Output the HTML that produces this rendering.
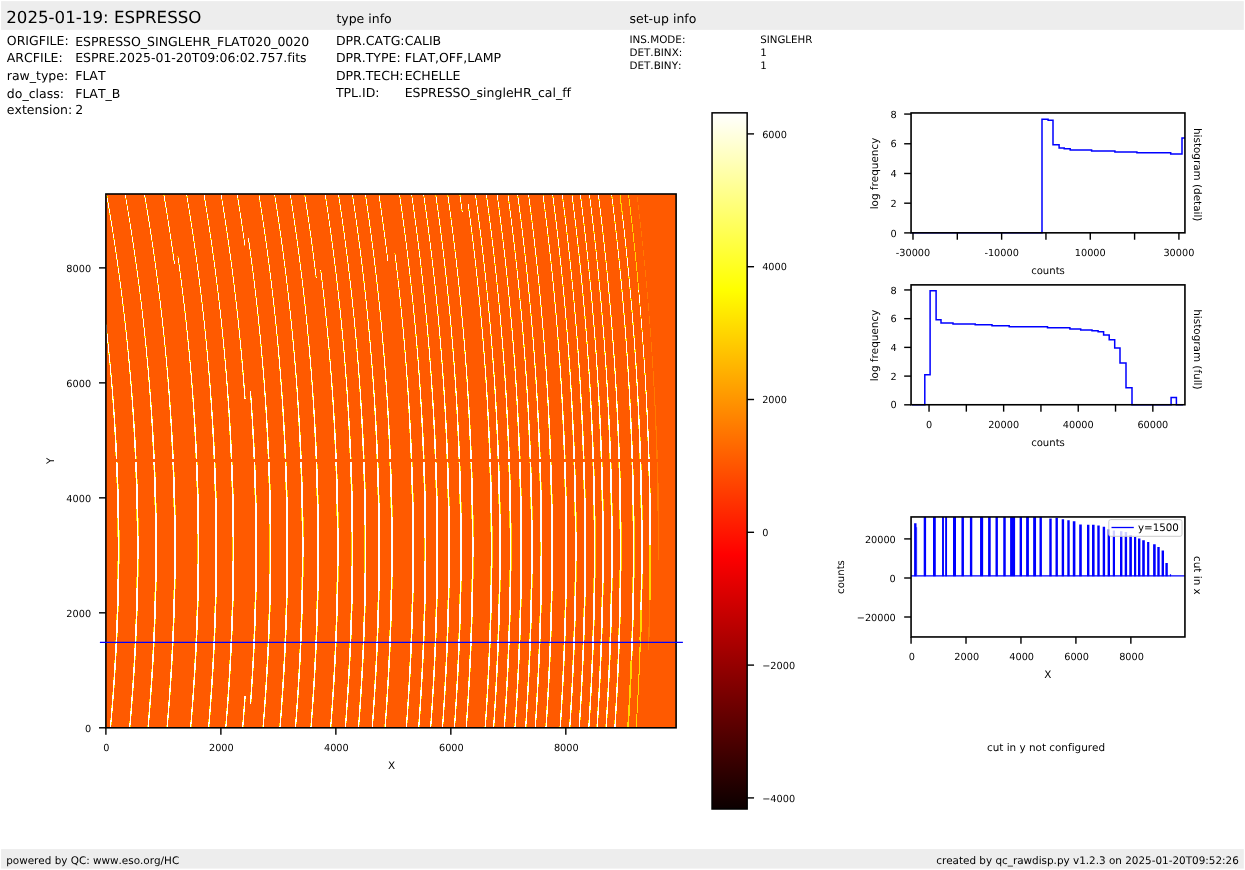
<!DOCTYPE html>
<html><head><meta charset="utf-8"><title>ESPRESSO raw display</title>
<style>html,body{margin:0;padding:0;background:#fff}svg{display:block}text{font-family:"DejaVu Sans","Liberation Sans",sans-serif;fill:#000;font-variant-ligatures:none;font-kerning:none;text-rendering:geometricPrecision}</style>
</head><body>
<svg width="1245" height="870" viewBox="0 0 1245 870">
<rect width="1245" height="870" fill="#fff"/>
<rect x="1.1" y="1.15" width="1242.7" height="28.72" fill="#ededed"/>
<rect x="1.1" y="849.1" width="1242.7" height="19.5" fill="#ededed"/>
<rect x="105.9" y="194.0" width="570.2" height="533.8" fill="#ff5a00"/>
<g fill="none" stroke-width="1" shape-rendering="crispEdges">
<path stroke="#ff7a00" d="M648.5 627v23M649.5 600v37M637.5 197v5M638.5 205v5M639.5 214v5M640.5 222v6M641.5 231v6M642.5 241v5M643.5 250v6M644.5 260v6M645.5 270v7M646.5 281v7M647.5 292v7M648.5 303v8M649.5 316v8M650.5 328v9M651.5 342v10M652.5 356v12M653.5 371v15M654.5 387v19M655.5 405v25M656.5 426v33M657.5 450v9M657.5 462v49M658.5 483v77"/>
<path stroke="#ffd800" d="M106.5 324v11M107.5 333v11M108.5 342v13M109.5 352v13M110.5 362v15M110.5 718v10M111.5 373v16M111.5 705v20M112.5 384v19M112.5 692v21M113.5 396v22M113.5 677v24M114.5 409v26M114.5 660v28M115.5 424v32M115.5 640v33M116.5 440v19M116.5 462v21M116.5 614v42M117.5 462v75M117.5 561v76M118.5 484v128M119.5 530v34M106.5 195v2M107.5 196v7M108.5 202v7M109.5 208v7M110.5 214v7M111.5 220v7M112.5 226v7M113.5 233v7M114.5 239v7M115.5 246v7M116.5 252v8M117.5 259v8M118.5 266v8M119.5 273v9M120.5 281v8M121.5 288v9M122.5 296v10M123.5 304v10M124.5 313v10M125.5 321v11M126.5 330v12M127.5 339v13M128.5 349v14M129.5 359v15M129.5 721v7M130.5 370v16M130.5 708v19M131.5 381v19M131.5 695v21M132.5 393v22M132.5 680v24M133.5 407v25M133.5 663v28M134.5 421v31M134.5 644v32M135.5 437v22M135.5 462v16M135.5 619v41M136.5 456v3M136.5 462v59M136.5 577v64M137.5 479v137M138.5 518v59M125.5 195v4M126.5 199v6M127.5 205v6M128.5 211v6M129.5 217v6M130.5 223v7M131.5 229v7M132.5 236v7M133.5 242v8M134.5 249v8M135.5 256v8M136.5 263v8M137.5 270v8M138.5 277v9M139.5 285v9M140.5 293v9M141.5 301v9M142.5 309v10M143.5 318v10M144.5 327v11M145.5 336v12M146.5 345v14M147.5 356v14M147.5 725v3M148.5 366v16M148.5 712v16M149.5 377v18M149.5 699v21M150.5 389v21M150.5 685v23M151.5 402v24M151.5 669v26M152.5 416v30M152.5 650v31M153.5 432v27M153.5 462v8M153.5 627v38M154.5 450v9M154.5 462v43M154.5 592v55M155.5 472v152M156.5 503v88M144.5 195v3M145.5 197v7M146.5 203v7M147.5 209v7M148.5 215v7M149.5 221v7M150.5 228v7M151.5 234v7M152.5 241v7M153.5 247v8M154.5 254v8M155.5 261v9M156.5 269v8M157.5 276v9M158.5 284v9M159.5 292v9M160.5 300v10M161.5 308v10M162.5 317v11M163.5 326v11M164.5 335v12M165.5 345v13M166.5 355v15M166.5 725v3M167.5 366v16M167.5 713v15M168.5 377v18M168.5 700v20M169.5 389v21M169.5 685v23M170.5 402v24M170.5 669v26M171.5 416v30M171.5 650v31M172.5 432v27M172.5 462v8M172.5 626v39M173.5 450v9M173.5 462v45M173.5 590v56M174.5 472v151M175.5 505v84M163.5 195v1M164.5 195v7M165.5 201v7M166.5 207v7M167.5 213v7M168.5 220v7M169.5 226v7M170.5 233v7M171.5 239v8M172.5 246v8M173.5 253v8M174.5 260v4M177.5 256v1M178.5 257v8M179.5 264v8M180.5 271v9M181.5 279v9M182.5 287v9M183.5 295v9M184.5 303v10M185.5 311v11M186.5 320v12M187.5 330v12M188.5 339v13M189.5 349v14M190.5 360v15M190.5 720v8M191.5 371v17M191.5 707v20M192.5 383v19M192.5 693v22M193.5 395v23M193.5 677v25M194.5 409v27M194.5 659v29M195.5 424v34M195.5 638v35M196.5 441v18M196.5 462v25M196.5 610v46M197.5 462v173M198.5 488v119M186.5 195v2M187.5 196v7M188.5 203v6M189.5 209v7M190.5 215v7M191.5 221v8M192.5 228v7M193.5 234v8M194.5 241v8M195.5 248v8M196.5 255v8M197.5 263v8M198.5 270v9M199.5 278v9M200.5 286v9M201.5 294v9M202.5 302v10M203.5 311v10M204.5 320v11M205.5 329v12M206.5 339v13M207.5 349v14M208.5 360v15M208.5 719v9M209.5 371v17M209.5 706v21M210.5 383v20M210.5 692v23M211.5 396v23M211.5 676v26M212.5 410v27M212.5 658v30M213.5 425v34M213.5 636v36M214.5 442v17M214.5 462v29M214.5 606v48M215.5 463v170M216.5 491v113M204.5 195v6M205.5 200v7M206.5 206v7M207.5 213v7M208.5 219v7M209.5 226v7M210.5 232v8M211.5 239v8M212.5 246v8M213.5 253v8M214.5 260v9M215.5 268v9M216.5 276v9M217.5 284v9M218.5 292v9M219.5 300v10M220.5 309v10M221.5 318v11M222.5 327v12M223.5 337v13M224.5 347v14M225.5 358v15M225.5 721v7M226.5 369v17M226.5 708v20M227.5 381v20M227.5 694v22M228.5 394v23M228.5 678v26M229.5 408v27M229.5 660v30M230.5 423v34M230.5 639v35M231.5 440v19M231.5 462v25M231.5 610v46M232.5 462v173M233.5 488v119M221.5 195v5M222.5 200v6M223.5 206v7M224.5 212v7M225.5 219v7M226.5 225v8M227.5 232v8M228.5 239v8M229.5 246v8M230.5 253v8M231.5 260v9M232.5 268v9M233.5 276v9M234.5 284v9M235.5 292v10M236.5 301v10M237.5 309v11M238.5 318v12M239.5 328v12M240.5 338v13M241.5 348v15M242.5 359v16M242.5 720v8M243.5 370v18M243.5 706v21M244.5 383v16M244.5 696v19M245.5 396v3M245.5 696v6M250.5 391v12M250.5 692v12M251.5 396v23M251.5 676v26M252.5 410v29M252.5 657v30M253.5 426v33M253.5 634v37M254.5 443v16M254.5 462v33M254.5 602v51M255.5 465v166M256.5 495v105M237.5 195v5M238.5 199v7M239.5 205v7M240.5 212v7M241.5 218v8M242.5 225v7M243.5 232v7M244.5 239v7M248.5 238v5M249.5 242v8M250.5 249v9M251.5 257v8M252.5 264v9M253.5 272v9M254.5 280v9M255.5 288v10M256.5 297v10M257.5 305v11M258.5 314v12M259.5 324v12M260.5 334v13M261.5 344v14M262.5 355v15M262.5 725v3M263.5 366v17M263.5 712v16M264.5 378v19M264.5 697v22M265.5 391v22M265.5 682v25M266.5 405v27M266.5 664v29M267.5 420v34M267.5 642v35M268.5 437v22M268.5 462v21M268.5 614v46M269.5 457v2M269.5 462v177M270.5 484v128M259.5 195v7M260.5 201v7M261.5 207v8M262.5 214v7M263.5 221v7M264.5 227v8M265.5 234v8M266.5 241v8M267.5 249v8M268.5 256v9M269.5 264v9M270.5 272v9M271.5 280v9M272.5 288v10M273.5 297v10M274.5 305v11M275.5 315v11M276.5 324v12M277.5 334v13M278.5 344v15M279.5 355v16M279.5 723v5M280.5 367v18M280.5 710v18M281.5 379v20M281.5 695v23M282.5 392v24M282.5 679v26M283.5 406v29M283.5 661v30M284.5 422v36M284.5 638v37M285.5 440v19M285.5 462v28M285.5 608v49M286.5 462v173M287.5 490v115M274.5 195v2M275.5 197v7M276.5 203v7M277.5 209v8M278.5 216v8M279.5 223v8M280.5 230v8M281.5 237v8M282.5 244v8M283.5 251v9M284.5 259v9M285.5 267v9M286.5 275v9M287.5 283v10M288.5 292v10M289.5 300v11M290.5 310v11M291.5 319v12M292.5 329v13M293.5 339v14M294.5 350v15M295.5 361v17M295.5 717v11M296.5 373v19M296.5 703v21M297.5 386v22M297.5 687v25M298.5 400v26M298.5 669v29M299.5 415v32M299.5 649v33M300.5 432v27M300.5 462v12M300.5 622v43M301.5 451v8M301.5 462v59M301.5 577v68M302.5 476v144M303.5 517v60M290.5 195v4M291.5 199v7M292.5 205v7M293.5 212v7M294.5 218v8M295.5 225v8M296.5 232v8M297.5 239v9M298.5 247v8M299.5 254v9M300.5 262v9M301.5 270v9M302.5 278v10M303.5 287v10M304.5 295v11M305.5 304v11M306.5 314v11M307.5 323v13M308.5 334v13M309.5 344v15M310.5 355v16M310.5 723v5M311.5 367v18M311.5 709v19M312.5 380v20M312.5 694v24M313.5 393v24M313.5 678v26M314.5 408v29M314.5 658v32M315.5 424v35M315.5 635v38M316.5 442v17M316.5 462v34M316.5 601v53M317.5 464v168M318.5 495v105M304.5 195v2M305.5 196v7M306.5 202v8M307.5 209v8M308.5 216v7M309.5 223v8M310.5 230v8M311.5 237v8M312.5 244v9M313.5 252v9M314.5 260v9M315.5 268v9M316.5 276v2M320.5 270v3M321.5 272v9M322.5 280v10M323.5 289v10M324.5 297v11M325.5 307v11M326.5 316v12M327.5 326v13M328.5 336v14M329.5 347v15M330.5 359v16M330.5 719v9M331.5 371v19M331.5 705v22M332.5 383v22M332.5 689v25M333.5 397v26M333.5 672v28M334.5 413v31M334.5 651v34M335.5 429v30M335.5 462v9M335.5 625v42M336.5 449v10M336.5 462v54M336.5 582v65M337.5 474v148M338.5 512v70M325.5 195v5M326.5 199v8M327.5 206v7M328.5 213v7M329.5 220v7M330.5 227v8M331.5 234v8M332.5 241v9M333.5 249v9M334.5 257v9M335.5 265v9M336.5 273v10M337.5 281v10M338.5 290v11M339.5 299v11M340.5 308v12M341.5 318v13M342.5 328v14M343.5 339v14M344.5 350v16M345.5 362v17M345.5 715v13M346.5 374v20M346.5 700v23M347.5 387v24M347.5 684v26M348.5 402v28M348.5 665v30M349.5 418v35M349.5 643v36M350.5 436v23M350.5 462v22M350.5 613v48M351.5 457v2M351.5 462v177M352.5 484v127M338.5 195v3M339.5 197v8M340.5 204v8M341.5 211v7M342.5 218v8M343.5 225v8M344.5 232v8M345.5 240v8M346.5 247v9M347.5 255v9M348.5 263v9M349.5 271v10M350.5 280v10M351.5 288v11M352.5 297v11M353.5 307v11M354.5 317v12M355.5 327v13M356.5 337v15M357.5 348v16M358.5 360v18M358.5 717v11M359.5 373v19M359.5 702v23M360.5 386v23M360.5 686v26M361.5 400v28M361.5 667v30M362.5 416v35M362.5 645v36M363.5 434v25M363.5 462v19M363.5 616v47M364.5 455v4M364.5 462v179M365.5 482v131M352.5 195v4M353.5 198v7M354.5 205v7M355.5 212v7M356.5 219v8M357.5 226v8M358.5 233v9M359.5 241v8M360.5 248v9M361.5 256v9M362.5 264v10M363.5 273v10M364.5 281v11M365.5 290v11M366.5 300v11M367.5 309v12M368.5 319v13M369.5 329v14M370.5 340v15M371.5 352v16M371.5 727v1M372.5 364v18M372.5 713v15M373.5 376v21M373.5 697v24M374.5 390v25M374.5 680v27M375.5 405v30M375.5 661v31M376.5 421v38M376.5 636v40M377.5 440v19M377.5 462v33M377.5 602v54M378.5 463v170M379.5 495v105M365.5 195v4M366.5 198v8M367.5 205v8M368.5 212v8M369.5 219v8M370.5 226v8M371.5 234v8M372.5 241v9M373.5 249v9M374.5 257v9M375.5 265v10M376.5 274v10M377.5 282v11M378.5 291v11M379.5 301v11M380.5 310v12M381.5 320v13M382.5 331v14M383.5 342v15M384.5 353v17M384.5 724v4M385.5 366v19M385.5 710v18M386.5 379v21M386.5 694v25M387.5 393v25M387.5 677v28M388.5 408v31M388.5 656v33M389.5 425v34M389.5 462v4M389.5 630v42M390.5 445v14M390.5 462v46M390.5 590v62M391.5 469v158M392.5 505v84M379.5 195v7M380.5 201v8M381.5 208v8M382.5 216v8M383.5 223v8M384.5 230v9M385.5 238v8M386.5 246v8M387.5 254v7M394.5 253v1M395.5 254v9M396.5 262v9M397.5 270v10M398.5 279v10M399.5 288v11M400.5 297v11M401.5 307v12M402.5 317v12M403.5 327v14M404.5 338v15M405.5 350v16M406.5 362v18M406.5 715v13M407.5 375v20M407.5 699v24M408.5 388v25M408.5 682v27M409.5 403v30M409.5 662v32M410.5 420v38M410.5 638v39M411.5 439v20M411.5 462v32M411.5 604v54M412.5 462v172M413.5 493v109M399.5 195v3M400.5 197v8M401.5 204v8M402.5 211v9M403.5 219v8M404.5 226v9M405.5 234v8M406.5 242v8M407.5 250v9M408.5 258v9M409.5 266v10M410.5 275v10M411.5 284v11M412.5 293v11M413.5 303v12M414.5 313v12M415.5 323v14M416.5 334v15M417.5 345v16M418.5 357v18M418.5 719v9M419.5 370v20M419.5 704v23M420.5 384v23M420.5 687v27M421.5 399v28M421.5 668v31M422.5 415v36M422.5 645v37M423.5 433v26M423.5 462v21M423.5 614v49M424.5 455v4M424.5 462v179M425.5 484v127M411.5 195v2M412.5 197v7M413.5 204v8M414.5 211v8M415.5 218v8M416.5 226v8M417.5 233v9M418.5 241v9M419.5 249v9M420.5 257v10M421.5 266v10M422.5 275v10M423.5 284v11M424.5 293v11M425.5 303v12M426.5 313v13M427.5 323v14M428.5 334v15M429.5 346v16M430.5 358v18M430.5 718v10M431.5 371v21M431.5 703v23M432.5 385v24M432.5 686v27M433.5 400v29M433.5 666v31M434.5 417v37M434.5 642v39M435.5 435v24M435.5 462v26M435.5 609v52M436.5 458v1M436.5 462v176M437.5 488v119M423.5 195v2M424.5 197v8M425.5 204v8M426.5 211v8M427.5 218v9M428.5 226v9M429.5 234v8M430.5 242v9M431.5 250v9M432.5 258v10M433.5 267v10M434.5 276v10M435.5 285v11M436.5 294v12M437.5 304v12M438.5 314v13M439.5 325v14M440.5 336v15M441.5 348v16M442.5 360v19M442.5 716v12M443.5 373v22M443.5 700v24M444.5 387v25M444.5 682v28M445.5 403v30M445.5 662v33M446.5 420v39M446.5 636v41M447.5 439v20M447.5 462v36M447.5 600v57M448.5 463v170M449.5 497v101M435.5 195v2M436.5 196v8M437.5 203v8M438.5 210v9M439.5 218v8M440.5 225v9M441.5 233v9M442.5 241v9M443.5 249v10M444.5 258v10M445.5 266v11M446.5 275v11M447.5 285v11M448.5 294v12M449.5 304v12M450.5 314v13M451.5 325v14M452.5 336v16M453.5 348v17M454.5 361v19M454.5 715v13M455.5 374v22M455.5 699v24M456.5 388v26M456.5 681v28M457.5 404v32M457.5 660v33M458.5 422v37M458.5 462v1M458.5 633v43M459.5 441v18M459.5 462v42M459.5 594v61M460.5 466v164M461.5 502v90M447.5 195v2M448.5 196v8M449.5 203v8M450.5 211v8M451.5 218v9M452.5 226v8M453.5 234v9M454.5 242v9M455.5 250v9M456.5 258v10M457.5 267v10M458.5 276v11M459.5 286v11M460.5 295v12M461.5 305v13M462.5 316v13M463.5 327v14M464.5 338v16M465.5 350v17M465.5 727v1M466.5 363v19M466.5 712v16M467.5 376v23M467.5 696v25M468.5 391v27M468.5 677v29M469.5 407v33M469.5 655v35M470.5 425v34M470.5 462v7M470.5 627v45M471.5 446v13M471.5 462v57M471.5 579v72M472.5 472v152M473.5 515v64M459.5 195v1M460.5 195v8M461.5 203v8M462.5 210v2M468.5 204v7M469.5 210v8M470.5 218v8M471.5 225v9M472.5 233v9M473.5 241v10M474.5 250v9M475.5 258v10M476.5 267v10M477.5 276v11M478.5 286v11M479.5 295v12M480.5 305v13M481.5 316v13M482.5 327v14M483.5 338v16M484.5 351v17M484.5 726v2M485.5 364v19M485.5 711v17M486.5 377v23M486.5 694v26M487.5 392v28M487.5 675v30M488.5 409v34M488.5 653v36M489.5 427v32M489.5 462v11M489.5 623v47M490.5 448v11M490.5 462v70M490.5 566v82M491.5 475v145M492.5 526v42M475.5 195v4M476.5 198v8M477.5 206v8M478.5 213v9M479.5 221v9M480.5 229v9M481.5 237v9M482.5 245v10M483.5 254v10M484.5 263v10M485.5 272v10M486.5 281v11M487.5 291v11M488.5 301v12M489.5 311v13M490.5 322v14M491.5 334v15M492.5 346v17M493.5 358v19M493.5 717v11M494.5 372v22M494.5 701v25M495.5 386v26M495.5 682v29M496.5 402v32M496.5 661v34M497.5 420v39M497.5 634v43M498.5 440v19M498.5 462v42M498.5 594v62M499.5 465v166M500.5 502v90M486.5 195v5M487.5 199v8M488.5 206v9M489.5 214v9M490.5 222v9M491.5 230v9M492.5 238v9M493.5 246v10M494.5 255v10M495.5 264v10M496.5 273v11M497.5 283v11M498.5 293v11M499.5 303v12M500.5 313v14M501.5 325v14M502.5 336v16M503.5 348v18M504.5 361v20M504.5 713v15M505.5 375v23M505.5 696v26M506.5 390v28M506.5 677v30M507.5 407v34M507.5 654v37M508.5 425v34M508.5 462v10M508.5 625v47M509.5 447v12M509.5 462v66M509.5 570v80M510.5 474v148M511.5 523v48M497.5 195v6M498.5 201v8M499.5 208v9M500.5 216v9M501.5 224v9M502.5 232v9M503.5 240v10M504.5 249v9M505.5 257v11M506.5 266v11M507.5 276v11M508.5 286v11M509.5 296v12M510.5 306v13M511.5 317v14M512.5 328v15M513.5 340v17M514.5 353v18M514.5 723v5M515.5 366v21M515.5 707v21M516.5 380v25M516.5 689v28M517.5 396v30M517.5 669v32M518.5 413v38M518.5 644v40M519.5 433v26M519.5 462v25M519.5 610v54M520.5 456v3M520.5 462v178M521.5 488v119M508.5 195v8M509.5 202v9M510.5 210v8M511.5 218v8M512.5 226v9M513.5 234v9M514.5 242v10M515.5 251v10M516.5 260v10M517.5 269v11M518.5 279v11M519.5 288v12M520.5 299v12M521.5 309v14M522.5 320v15M523.5 332v16M524.5 344v17M525.5 357v19M525.5 718v10M526.5 371v22M526.5 701v26M527.5 386v26M527.5 682v30M528.5 402v33M528.5 660v35M529.5 420v39M529.5 462v1M529.5 633v44M530.5 441v18M530.5 462v47M530.5 589v67M531.5 467v162M532.5 506v82M517.5 195v3M518.5 197v8M519.5 204v9M520.5 212v9M521.5 220v9M522.5 228v10M523.5 237v9M524.5 245v10M525.5 254v10M526.5 263v11M527.5 272v12M528.5 282v12M529.5 292v12M530.5 303v13M531.5 314v13M532.5 325v15M533.5 337v16M534.5 350v18M534.5 727v1M535.5 363v21M535.5 711v17M536.5 377v24M536.5 693v27M537.5 393v29M537.5 673v32M538.5 410v37M538.5 649v38M539.5 429v30M539.5 462v19M539.5 616v52M540.5 452v7M540.5 462v182M541.5 482v131M528.5 195v3M529.5 198v8M530.5 205v9M531.5 213v9M532.5 221v9M533.5 229v10M534.5 238v10M535.5 247v10M536.5 255v11M537.5 265v10M538.5 274v11M539.5 284v12M540.5 294v13M541.5 305v13M542.5 316v14M543.5 328v15M544.5 340v17M545.5 353v18M545.5 723v5M546.5 366v22M546.5 706v22M547.5 381v25M547.5 688v29M548.5 397v31M548.5 667v33M549.5 415v40M549.5 641v42M550.5 435v24M550.5 462v33M550.5 603v59M551.5 462v175M552.5 494v107M543.5 195v8M544.5 202v9M545.5 210v9M546.5 218v9M547.5 226v10M548.5 235v10M549.5 244v10M550.5 253v10M551.5 262v10M552.5 271v11M553.5 281v12M554.5 291v13M555.5 302v13M556.5 313v14M557.5 325v15M558.5 337v16M559.5 350v18M559.5 726v2M560.5 363v21M560.5 710v18M561.5 378v25M561.5 692v28M562.5 394v30M562.5 671v33M563.5 411v39M563.5 645v41M564.5 431v28M564.5 462v25M564.5 610v56M565.5 455v4M565.5 462v179M566.5 487v120M552.5 195v3M553.5 197v9M554.5 205v9M555.5 213v9M556.5 221v9M557.5 229v10M558.5 238v10M559.5 247v10M560.5 256v10M561.5 265v11M562.5 275v11M563.5 285v12M564.5 295v13M565.5 306v14M566.5 318v14M567.5 329v16M568.5 342v18M569.5 355v20M569.5 719v9M570.5 369v23M570.5 702v26M571.5 385v27M571.5 683v30M572.5 401v34M572.5 660v36M573.5 420v39M573.5 462v3M573.5 631v46M574.5 442v17M574.5 462v54M574.5 582v73M575.5 469v158M576.5 512v70M562.5 195v6M563.5 200v9M564.5 208v9M565.5 216v9M566.5 224v10M567.5 233v10M568.5 242v10M569.5 251v10M570.5 260v11M571.5 270v11M572.5 280v11M573.5 290v12M574.5 301v13M575.5 312v14M576.5 324v15M577.5 336v17M578.5 349v19M578.5 727v1M579.5 363v21M579.5 710v18M580.5 377v26M580.5 692v28M581.5 394v30M581.5 671v33M582.5 411v40M582.5 645v41M583.5 431v28M583.5 462v27M583.5 608v57M584.5 456v3M584.5 462v178M585.5 489v117M572.5 195v8M573.5 202v9M574.5 211v9M575.5 219v9M576.5 227v10M577.5 236v10M578.5 245v10M579.5 254v11M580.5 263v12M581.5 273v12M582.5 283v13M583.5 294v13M584.5 305v14M585.5 316v15M586.5 328v16M587.5 341v18M588.5 355v19M588.5 720v8M589.5 369v23M589.5 702v26M590.5 384v28M590.5 683v30M591.5 401v34M591.5 660v36M592.5 420v39M592.5 462v4M592.5 630v47M593.5 442v17M593.5 462v58M593.5 578v77M594.5 469v157M595.5 516v62M580.5 195v5M581.5 199v9M582.5 207v9M583.5 216v9M584.5 224v10M585.5 233v10M586.5 242v10M587.5 251v10M588.5 260v11M589.5 270v11M590.5 280v12M591.5 290v13M592.5 301v14M593.5 313v14M594.5 325v15M595.5 337v17M596.5 350v20M596.5 724v4M597.5 365v22M597.5 707v21M598.5 380v26M598.5 688v30M599.5 396v33M599.5 666v35M600.5 415v42M600.5 639v44M601.5 436v23M601.5 462v39M601.5 597v64M602.5 462v172M603.5 499v96M589.5 195v4M590.5 199v8M591.5 207v9M592.5 215v9M593.5 223v10M594.5 232v10M595.5 241v10M596.5 250v11M597.5 260v11M598.5 269v12M599.5 280v12M600.5 290v13M601.5 301v14M602.5 313v14M603.5 325v15M604.5 337v18M605.5 351v19M605.5 724v4M606.5 365v22M606.5 707v21M607.5 380v27M607.5 688v30M608.5 397v33M608.5 665v36M609.5 415v44M609.5 637v45M610.5 437v22M610.5 462v43M610.5 593v67M611.5 463v170M612.5 503v88M598.5 195v5M599.5 199v9M600.5 208v9M601.5 216v9M602.5 224v10M603.5 233v10M604.5 242v11M605.5 252v10M606.5 261v11M607.5 271v12M608.5 281v13M609.5 292v13M610.5 303v14M611.5 315v15M612.5 327v16M613.5 340v18M614.5 354v20M614.5 720v8M615.5 368v23M615.5 703v25M616.5 384v28M616.5 683v31M617.5 401v35M617.5 659v38M618.5 420v39M618.5 462v6M618.5 628v49M619.5 443v16M619.5 462v67M619.5 570v84M620.5 471v153M621.5 522v49M611.5 195v3M612.5 197v9M613.5 205v9M614.5 214v9M615.5 222v10M616.5 231v10M617.5 240v10M618.5 249v11M619.5 259v11M620.5 269v12M621.5 279v13M622.5 290v13M623.5 301v14M624.5 313v15M625.5 325v16M626.5 338v18M627.5 352v20M627.5 722v6M628.5 366v23M628.5 705v23M629.5 382v28M629.5 685v31M630.5 399v35M630.5 661v37M631.5 418v41M631.5 462v3M631.5 631v48M632.5 441v18M632.5 462v59M632.5 577v79M633.5 469v158M634.5 516v62M620.5 195v9M621.5 203v9M622.5 211v10M623.5 220v9M624.5 229v10M625.5 238v10M626.5 247v11M627.5 257v11M628.5 267v11M629.5 277v12M630.5 288v12M631.5 299v13M632.5 310v15M633.5 322v16M634.5 335v18M635.5 349v20M636.5 363v23M637.5 379v27M638.5 396v33M639.5 415v44M639.5 637v3M640.5 437v22M640.5 462v46M640.5 590v50M641.5 464v168M642.5 505v84M636.5 714v14M637.5 695v18M638.5 674v21M639.5 647v28M640.5 640v12M628.5 195v3M629.5 199v7M630.5 207v8M631.5 216v7M632.5 224v8M633.5 233v9M634.5 243v8M635.5 252v9M636.5 262v9M637.5 272v10M638.5 283v10M639.5 294v11M640.5 306v11M641.5 318v12M642.5 330v14M643.5 344v15M644.5 358v17M645.5 373v21M646.5 390v25M647.5 408v33M648.5 429v30M648.5 462v14M649.5 454v5M649.5 462v138M650.5 488v112"/>
<path stroke="#fff" d="M106.5 325v8M107.5 334v9M108.5 344v9M109.5 354v9M110.5 364v11M110.5 720v8M111.5 375v12M111.5 708v14M112.5 386v14M112.5 695v16M113.5 399v16M113.5 680v19M114.5 412v20M114.5 663v22M115.5 427v25M115.5 644v26M116.5 443v16M116.5 462v15M116.5 620v33M117.5 463v55M117.5 579v54M118.5 489v117M106.5 195v1M107.5 198v4M108.5 203v5M109.5 209v4M110.5 215v5M111.5 221v5M112.5 227v5M113.5 234v4M114.5 240v5M115.5 247v5M116.5 254v5M117.5 260v6M118.5 268v5M119.5 275v5M120.5 282v6M121.5 290v6M122.5 298v6M123.5 306v6M124.5 314v7M125.5 323v7M126.5 332v8M127.5 341v9M128.5 351v10M129.5 361v11M129.5 723v5M130.5 372v12M130.5 711v14M131.5 384v13M131.5 697v17M132.5 396v16M132.5 683v18M133.5 409v19M133.5 667v21M134.5 424v24M134.5 648v25M135.5 440v19M135.5 462v10M135.5 624v32M136.5 462v47M136.5 588v48M137.5 484v127M138.5 536v23M125.5 195v3M126.5 200v4M127.5 206v4M128.5 212v4M129.5 218v4M130.5 224v5M131.5 230v5M132.5 237v5M133.5 243v5M134.5 250v5M135.5 257v5M136.5 264v5M137.5 271v6M138.5 279v5M139.5 286v6M140.5 294v6M141.5 302v7M142.5 311v7M143.5 319v8M144.5 328v8M145.5 338v8M146.5 347v10M147.5 358v10M147.5 727v1M148.5 368v12M148.5 715v13M149.5 380v13M149.5 702v16M150.5 392v15M150.5 688v17M151.5 405v18M151.5 672v20M152.5 419v23M152.5 654v24M153.5 435v24M153.5 462v3M153.5 632v30M154.5 454v5M154.5 462v35M154.5 601v42M155.5 477v142M156.5 513v69M144.5 195v2M145.5 198v4M146.5 204v4M147.5 210v5M148.5 216v5M149.5 222v5M150.5 229v5M151.5 235v5M152.5 242v5M153.5 249v5M154.5 256v5M155.5 263v5M156.5 270v6M157.5 278v5M158.5 285v6M159.5 293v6M160.5 301v7M161.5 310v7M162.5 318v8M163.5 327v8M164.5 337v8M165.5 347v9M166.5 357v10M166.5 727v1M167.5 368v11M167.5 715v13M168.5 379v14M168.5 702v16M169.5 391v16M169.5 688v18M170.5 405v18M170.5 672v20M171.5 419v23M171.5 654v24M172.5 435v24M172.5 462v3M172.5 631v30M173.5 454v5M173.5 462v36M173.5 599v43M174.5 477v141M175.5 515v64M164.5 196v5M165.5 202v5M166.5 208v5M167.5 215v4M168.5 221v5M169.5 227v5M170.5 234v5M171.5 241v5M172.5 247v5M173.5 254v6M174.5 261v3M178.5 258v5M179.5 265v6M180.5 273v5M181.5 280v6M182.5 288v6M183.5 296v7M184.5 304v7M185.5 313v7M186.5 322v8M187.5 331v9M188.5 341v9M189.5 351v10M190.5 362v11M190.5 722v6M191.5 373v12M191.5 709v15M192.5 385v14M192.5 695v17M193.5 398v17M193.5 680v20M194.5 412v20M194.5 663v22M195.5 427v26M195.5 642v28M196.5 444v15M196.5 462v19M196.5 616v36M197.5 465v69M197.5 564v66M198.5 494v107M186.5 195v1M187.5 198v4M188.5 204v4M189.5 210v4M190.5 216v5M191.5 223v4M192.5 229v5M193.5 236v5M194.5 243v5M195.5 250v5M196.5 257v5M197.5 264v6M198.5 271v6M199.5 279v6M200.5 287v6M201.5 295v7M202.5 304v7M203.5 312v8M204.5 321v8M205.5 331v8M206.5 341v9M207.5 351v10M208.5 362v11M208.5 722v6M209.5 373v13M209.5 709v15M210.5 385v15M210.5 695v17M211.5 398v18M211.5 679v20M212.5 412v22M212.5 662v23M213.5 428v27M213.5 641v28M214.5 446v13M214.5 462v22M214.5 613v37M215.5 468v160M216.5 498v99M204.5 195v5M205.5 201v5M206.5 208v4M207.5 214v4M208.5 220v5M209.5 227v5M210.5 234v4M211.5 240v5M212.5 247v6M213.5 255v5M214.5 262v5M215.5 269v6M216.5 277v6M217.5 285v6M218.5 293v7M219.5 302v7M220.5 310v8M221.5 319v8M222.5 329v8M223.5 339v9M224.5 349v10M225.5 360v11M225.5 724v4M226.5 371v13M226.5 711v15M227.5 383v15M227.5 697v17M228.5 396v17M228.5 682v19M229.5 410v21M229.5 664v23M230.5 426v27M230.5 643v28M231.5 444v15M231.5 462v19M231.5 616v37M232.5 465v72M232.5 561v70M233.5 494v107M221.5 195v4M222.5 201v4M223.5 207v5M224.5 213v5M225.5 220v5M226.5 227v4M227.5 233v5M228.5 240v5M229.5 247v6M230.5 254v6M231.5 262v5M232.5 269v6M233.5 277v6M234.5 285v7M235.5 294v6M236.5 302v7M237.5 311v7M238.5 320v8M239.5 330v8M240.5 340v9M241.5 350v10M242.5 361v11M242.5 722v6M243.5 373v13M243.5 709v16M244.5 385v14M244.5 696v16M245.5 398v1M245.5 696v3M250.5 391v9M250.5 695v9M251.5 398v18M251.5 679v20M252.5 413v22M252.5 661v23M253.5 429v28M253.5 639v29M254.5 447v12M254.5 462v26M254.5 609v40M255.5 470v156M256.5 503v89M237.5 195v3M238.5 200v5M239.5 207v4M240.5 213v5M241.5 219v5M242.5 226v5M243.5 233v5M244.5 240v5M248.5 238v4M249.5 243v6M250.5 251v5M251.5 258v6M252.5 266v5M253.5 273v6M254.5 281v7M255.5 290v6M256.5 298v7M257.5 307v7M258.5 316v8M259.5 326v8M260.5 335v9M261.5 346v10M262.5 357v11M262.5 727v1M263.5 368v12M263.5 714v14M264.5 380v15M264.5 700v17M265.5 393v17M265.5 685v19M266.5 407v21M266.5 667v23M267.5 423v26M267.5 647v27M268.5 441v18M268.5 462v14M268.5 620v36M269.5 462v62M269.5 574v60M270.5 490v115M259.5 196v4M260.5 202v5M261.5 209v4M262.5 215v5M263.5 222v5M264.5 229v5M265.5 236v5M266.5 243v5M267.5 250v6M268.5 258v5M269.5 265v6M270.5 273v6M271.5 281v7M272.5 290v6M273.5 298v7M274.5 307v7M275.5 316v8M276.5 326v8M277.5 336v9M278.5 346v11M279.5 357v12M279.5 726v2M280.5 369v13M280.5 713v15M281.5 382v14M281.5 698v18M282.5 395v17M282.5 682v20M283.5 409v22M283.5 664v24M284.5 425v28M284.5 643v29M285.5 444v15M285.5 462v20M285.5 615v38M286.5 466v164M287.5 497v101M274.5 195v1M275.5 198v4M276.5 204v5M277.5 211v5M278.5 217v5M279.5 224v5M280.5 231v5M281.5 238v6M282.5 245v6M283.5 253v6M284.5 261v5M285.5 268v6M286.5 276v7M287.5 285v6M288.5 293v7M289.5 302v7M290.5 311v8M291.5 321v8M292.5 331v9M293.5 341v10M294.5 352v11M295.5 363v12M295.5 719v9M296.5 375v14M296.5 705v17M297.5 388v17M297.5 690v19M298.5 402v20M298.5 673v22M299.5 418v24M299.5 653v26M300.5 435v24M300.5 462v6M300.5 628v34M301.5 455v4M301.5 462v46M301.5 590v51M302.5 482v132M303.5 537v20M290.5 195v3M291.5 200v4M292.5 206v5M293.5 213v5M294.5 220v5M295.5 227v5M296.5 234v5M297.5 241v5M298.5 248v6M299.5 256v6M300.5 264v6M301.5 272v6M302.5 280v6M303.5 288v7M304.5 297v7M305.5 306v8M306.5 316v8M307.5 325v9M308.5 336v9M309.5 346v11M310.5 357v12M310.5 726v2M311.5 369v13M311.5 712v16M312.5 382v15M312.5 697v18M313.5 396v18M313.5 681v21M314.5 410v23M314.5 662v25M315.5 427v29M315.5 640v30M316.5 446v13M316.5 462v26M316.5 609v41M317.5 469v157M318.5 504v87M305.5 197v5M306.5 204v5M307.5 210v5M308.5 217v5M309.5 224v5M310.5 231v5M311.5 238v6M312.5 246v5M313.5 253v6M314.5 261v6M315.5 269v6M316.5 277v1M320.5 270v1M321.5 273v7M322.5 282v6M323.5 290v7M324.5 299v7M325.5 308v8M326.5 318v8M327.5 328v9M328.5 338v10M329.5 349v11M330.5 361v12M330.5 722v6M331.5 373v14M331.5 708v16M332.5 386v16M332.5 692v19M333.5 400v20M333.5 675v22M334.5 416v24M334.5 655v27M335.5 433v26M335.5 462v4M335.5 631v33M336.5 453v6M336.5 462v42M336.5 594v49M337.5 479v137M338.5 528v38M325.5 195v4M326.5 201v4M327.5 207v5M328.5 214v5M329.5 221v5M330.5 228v5M331.5 235v6M332.5 243v5M333.5 250v6M334.5 258v6M335.5 266v6M336.5 274v7M337.5 283v7M338.5 292v7M339.5 301v7M340.5 310v8M341.5 320v9M342.5 330v9M343.5 341v10M344.5 352v11M345.5 364v13M345.5 718v10M346.5 377v14M346.5 703v18M347.5 390v17M347.5 687v20M348.5 405v21M348.5 669v24M349.5 421v27M349.5 648v28M350.5 439v20M350.5 462v15M350.5 620v37M351.5 462v70M351.5 566v69M352.5 491v113M338.5 195v2M339.5 199v4M340.5 205v5M341.5 212v5M342.5 219v5M343.5 226v5M344.5 233v6M345.5 241v6M346.5 249v5M347.5 256v6M348.5 264v7M349.5 273v6M350.5 281v7M351.5 290v7M352.5 299v8M353.5 309v7M354.5 318v9M355.5 329v9M356.5 339v10M357.5 351v11M358.5 362v13M358.5 720v8M359.5 375v14M359.5 705v17M360.5 389v17M360.5 689v20M361.5 403v21M361.5 671v23M362.5 419v27M362.5 650v28M363.5 438v21M363.5 462v12M363.5 622v37M364.5 462v63M364.5 573v64M365.5 489v117M352.5 195v2M353.5 199v5M354.5 206v5M355.5 213v5M356.5 220v5M357.5 227v6M358.5 235v5M359.5 242v6M360.5 250v6M361.5 258v6M362.5 266v6M363.5 274v7M364.5 283v7M365.5 292v7M366.5 301v8M367.5 311v8M368.5 321v9M369.5 331v10M370.5 342v11M371.5 354v11M372.5 366v13M372.5 715v13M373.5 379v15M373.5 700v19M374.5 393v18M374.5 684v21M375.5 408v23M375.5 665v24M376.5 425v29M376.5 641v31M377.5 444v15M377.5 462v25M377.5 610v42M378.5 468v160M379.5 503v88M365.5 195v2M366.5 199v5M367.5 206v5M368.5 213v5M369.5 220v6M370.5 228v5M371.5 235v6M372.5 243v5M373.5 250v6M374.5 258v7M375.5 267v6M376.5 275v7M377.5 284v7M378.5 293v7M379.5 302v8M380.5 312v8M381.5 322v9M382.5 333v10M383.5 344v11M384.5 356v12M384.5 727v1M385.5 368v14M385.5 713v15M386.5 381v16M386.5 697v19M387.5 396v19M387.5 680v22M388.5 411v24M388.5 660v26M389.5 429v30M389.5 636v32M390.5 449v10M390.5 462v35M390.5 600v47M391.5 474v147M392.5 517v60M379.5 196v5M380.5 203v5M381.5 210v5M382.5 217v5M383.5 224v6M384.5 232v5M385.5 239v6M386.5 247v6M387.5 255v6M395.5 255v6M396.5 263v7M397.5 272v6M398.5 281v6M399.5 290v7M400.5 299v7M401.5 309v8M402.5 319v8M403.5 329v10M404.5 340v10M405.5 352v11M406.5 364v13M406.5 717v11M407.5 377v15M407.5 702v18M408.5 391v18M408.5 685v21M409.5 406v23M409.5 666v25M410.5 423v30M410.5 643v31M411.5 443v16M411.5 462v23M411.5 612v42M412.5 467v162M413.5 502v91M399.5 195v2M400.5 199v5M401.5 206v5M402.5 213v5M403.5 220v6M404.5 228v5M405.5 235v6M406.5 243v6M407.5 251v6M408.5 259v7M409.5 268v6M410.5 277v6M411.5 286v7M412.5 295v7M413.5 305v8M414.5 315v8M415.5 325v9M416.5 336v10M417.5 348v11M418.5 360v13M418.5 722v6M419.5 373v14M419.5 707v18M420.5 387v17M420.5 690v21M421.5 402v21M421.5 672v24M422.5 418v28M422.5 650v29M423.5 437v22M423.5 462v14M423.5 621v38M424.5 462v76M424.5 561v75M425.5 491v113M411.5 195v1M412.5 198v5M413.5 205v5M414.5 212v6M415.5 220v5M416.5 227v6M417.5 235v6M418.5 243v6M419.5 251v6M420.5 259v6M421.5 268v6M422.5 276v7M423.5 286v7M424.5 295v8M425.5 305v8M426.5 315v8M427.5 325v10M428.5 337v10M429.5 348v12M430.5 361v12M430.5 721v7M431.5 374v15M431.5 706v18M432.5 388v18M432.5 689v21M433.5 403v22M433.5 670v24M434.5 420v29M434.5 647v30M435.5 439v20M435.5 462v18M435.5 617v40M436.5 463v170M437.5 496v103M423.5 195v1M424.5 198v5M425.5 205v5M426.5 212v6M427.5 220v5M428.5 227v6M429.5 235v6M430.5 243v6M431.5 251v6M432.5 260v6M433.5 268v7M434.5 277v7M435.5 286v8M436.5 296v8M437.5 306v8M438.5 316v9M439.5 327v9M440.5 338v11M441.5 350v12M442.5 363v13M442.5 719v9M443.5 376v15M443.5 703v19M444.5 390v19M444.5 686v21M445.5 406v23M445.5 666v25M446.5 423v31M446.5 642v32M447.5 443v16M447.5 462v27M447.5 609v44M448.5 468v159M449.5 506v82M436.5 197v6M437.5 205v5M438.5 212v5M439.5 219v6M440.5 227v6M441.5 235v6M442.5 243v6M443.5 251v6M444.5 259v7M445.5 268v7M446.5 277v7M447.5 286v8M448.5 296v8M449.5 306v8M450.5 316v9M451.5 327v10M452.5 339v10M453.5 351v11M454.5 363v14M454.5 718v10M455.5 377v16M455.5 702v19M456.5 391v19M456.5 684v22M457.5 407v24M457.5 664v26M458.5 425v32M458.5 639v33M459.5 446v13M459.5 462v32M459.5 604v47M460.5 471v153M461.5 513v68M448.5 197v6M449.5 205v5M450.5 212v5M451.5 220v5M452.5 227v6M453.5 235v6M454.5 243v6M455.5 252v6M456.5 260v7M457.5 269v7M458.5 278v7M459.5 287v8M460.5 297v8M461.5 307v9M462.5 318v9M463.5 329v10M464.5 340v11M465.5 352v13M466.5 365v14M466.5 715v13M467.5 379v17M467.5 699v19M468.5 394v20M468.5 681v22M469.5 410v26M469.5 659v28M470.5 429v30M470.5 462v1M470.5 633v35M471.5 450v9M471.5 462v43M471.5 592v54M472.5 478v139M473.5 537v20M460.5 197v5M461.5 204v5M462.5 211v1M468.5 204v5M469.5 211v6M470.5 219v6M471.5 227v5M472.5 235v6M473.5 243v6M474.5 251v7M475.5 260v6M476.5 269v7M477.5 278v7M478.5 287v8M479.5 297v8M480.5 307v9M481.5 318v9M482.5 329v10M483.5 341v11M484.5 353v12M485.5 366v14M485.5 714v14M486.5 380v17M486.5 698v19M487.5 395v21M487.5 679v23M488.5 412v26M488.5 657v28M489.5 431v28M489.5 462v5M489.5 630v36M490.5 453v6M490.5 462v51M490.5 585v59M491.5 482v131M475.5 195v3M476.5 200v5M477.5 207v6M478.5 215v5M479.5 222v6M480.5 230v6M481.5 238v7M482.5 247v6M483.5 255v7M484.5 264v7M485.5 273v7M486.5 283v7M487.5 293v7M488.5 303v8M489.5 313v9M490.5 324v10M491.5 336v10M492.5 348v12M493.5 361v13M493.5 720v8M494.5 375v15M494.5 704v19M495.5 389v20M495.5 686v22M496.5 406v24M496.5 665v27M497.5 424v32M497.5 640v33M498.5 445v14M498.5 462v32M498.5 604v48M499.5 471v154M500.5 514v66M486.5 195v3M487.5 200v6M488.5 208v5M489.5 216v5M490.5 223v6M491.5 231v6M492.5 240v6M493.5 248v6M494.5 257v6M495.5 266v7M496.5 275v7M497.5 285v7M498.5 294v8M499.5 305v8M500.5 315v10M501.5 327v10M502.5 338v11M503.5 351v12M504.5 364v14M504.5 716v12M505.5 378v17M505.5 699v20M506.5 393v21M506.5 681v23M507.5 410v26M507.5 659v28M508.5 429v30M508.5 462v3M508.5 631v37M509.5 451v8M509.5 462v49M509.5 587v58M510.5 480v135M497.5 195v5M498.5 202v5M499.5 210v5M500.5 217v6M501.5 225v6M502.5 233v6M503.5 242v6M504.5 250v7M505.5 259v7M506.5 268v7M507.5 278v7M508.5 287v8M509.5 297v9M510.5 308v9M511.5 319v9M512.5 330v11M513.5 342v12M514.5 355v13M514.5 726v2M515.5 369v15M515.5 710v18M516.5 383v18M516.5 693v21M517.5 399v23M517.5 673v25M518.5 417v29M518.5 649v31M519.5 437v22M519.5 462v17M519.5 618v42M520.5 462v173M521.5 496v103M508.5 196v5M509.5 204v5M510.5 211v6M511.5 219v6M512.5 227v6M513.5 235v7M514.5 244v6M515.5 253v6M516.5 262v6M517.5 271v7M518.5 280v8M519.5 290v8M520.5 301v8M521.5 311v9M522.5 322v10M523.5 334v11M524.5 347v12M525.5 360v14M525.5 721v7M526.5 374v16M526.5 704v20M527.5 389v19M527.5 686v23M528.5 405v25M528.5 665v27M529.5 424v33M529.5 639v34M530.5 445v14M530.5 462v35M530.5 600v51M531.5 473v150M532.5 520v54M517.5 195v1M518.5 198v6M519.5 206v6M520.5 214v5M521.5 222v6M522.5 230v6M523.5 238v7M524.5 247v6M525.5 256v6M526.5 265v7M527.5 274v8M528.5 284v8M529.5 294v8M530.5 305v8M531.5 316v9M532.5 327v10M533.5 339v12M534.5 352v13M535.5 366v14M535.5 714v14M536.5 380v18M536.5 697v21M537.5 396v22M537.5 677v25M538.5 413v29M538.5 654v30M539.5 433v26M539.5 462v11M539.5 623v41M540.5 457v2M540.5 462v80M540.5 556v83M541.5 490v115M528.5 195v2M529.5 199v6M530.5 207v5M531.5 215v5M532.5 223v6M533.5 231v6M534.5 239v7M535.5 248v7M536.5 257v7M537.5 266v8M538.5 276v7M539.5 286v8M540.5 296v9M541.5 307v9M542.5 318v10M543.5 330v10M544.5 342v12M545.5 355v14M545.5 726v2M546.5 369v16M546.5 710v18M547.5 384v19M547.5 692v22M548.5 400v24M548.5 671v26M549.5 418v31M549.5 646v33M550.5 439v20M550.5 462v23M550.5 612v45M551.5 465v166M552.5 504v87M543.5 196v6M544.5 204v5M545.5 212v6M546.5 220v6M547.5 228v6M548.5 237v6M549.5 245v7M550.5 254v7M551.5 264v7M552.5 273v8M553.5 283v8M554.5 293v9M555.5 304v9M556.5 315v10M557.5 327v10M558.5 339v12M559.5 352v13M560.5 366v15M560.5 713v15M561.5 381v18M561.5 695v22M562.5 397v23M562.5 675v25M563.5 415v30M563.5 651v31M564.5 435v24M564.5 462v17M564.5 618v43M565.5 462v174M566.5 496v103M552.5 195v1M553.5 198v6M554.5 206v6M555.5 214v6M556.5 222v7M557.5 231v6M558.5 239v7M559.5 248v7M560.5 258v7M561.5 267v7M562.5 277v7M563.5 287v8M564.5 297v9M565.5 308v10M566.5 320v10M567.5 332v11M568.5 344v13M569.5 358v14M569.5 722v6M570.5 372v17M570.5 705v20M571.5 388v20M571.5 687v23M572.5 405v25M572.5 665v28M573.5 424v35M573.5 637v36M574.5 446v13M574.5 462v40M574.5 596v54M575.5 475v146M576.5 532v29M562.5 195v4M563.5 202v5M564.5 210v5M565.5 218v6M566.5 226v6M567.5 235v6M568.5 243v7M569.5 252v7M570.5 262v7M571.5 272v7M572.5 282v7M573.5 292v8M574.5 303v9M575.5 314v10M576.5 326v10M577.5 338v12M578.5 351v14M579.5 365v16M579.5 713v15M580.5 380v19M580.5 696v21M581.5 397v23M581.5 675v26M582.5 415v30M582.5 650v32M583.5 436v23M583.5 462v18M583.5 617v44M584.5 462v173M585.5 498v99M572.5 196v6M573.5 204v6M574.5 212v6M575.5 220v6M576.5 229v6M577.5 238v6M578.5 247v6M579.5 256v7M580.5 265v8M581.5 275v8M582.5 285v8M583.5 296v9M584.5 307v9M585.5 319v10M586.5 331v11M587.5 344v12M588.5 357v14M588.5 723v5M589.5 372v16M589.5 706v20M590.5 387v21M590.5 687v23M591.5 405v26M591.5 664v29M592.5 424v35M592.5 636v37M593.5 447v12M593.5 462v43M593.5 593v57M594.5 476v144M580.5 195v4M581.5 201v6M582.5 209v6M583.5 217v6M584.5 226v6M585.5 234v7M586.5 243v7M587.5 252v7M588.5 262v7M589.5 272v7M590.5 282v8M591.5 292v9M592.5 303v10M593.5 315v10M594.5 327v11M595.5 340v12M596.5 353v14M596.5 727v1M597.5 367v16M597.5 711v17M598.5 383v19M598.5 692v23M599.5 400v24M599.5 671v27M600.5 418v33M600.5 645v34M601.5 440v19M601.5 462v28M601.5 607v50M602.5 467v161M603.5 511v72M589.5 195v3M590.5 200v6M591.5 208v6M592.5 216v7M593.5 225v6M594.5 234v6M595.5 243v6M596.5 252v7M597.5 262v7M598.5 271v8M599.5 282v8M600.5 292v9M601.5 303v9M602.5 315v10M603.5 327v11M604.5 340v12M605.5 353v14M605.5 727v1M606.5 368v16M606.5 710v18M607.5 383v20M607.5 692v22M608.5 400v25M608.5 670v27M609.5 419v34M609.5 643v35M610.5 441v18M610.5 462v31M610.5 604v51M611.5 469v158M612.5 516v62M598.5 195v4M599.5 201v6M600.5 209v6M601.5 217v7M602.5 226v6M603.5 235v7M604.5 244v7M605.5 253v7M606.5 263v7M607.5 273v8M608.5 283v9M609.5 294v9M610.5 305v10M611.5 317v10M612.5 329v12M613.5 342v13M614.5 356v15M614.5 724v4M615.5 371v17M615.5 706v21M616.5 387v21M616.5 687v24M617.5 404v27M617.5 664v29M618.5 424v35M618.5 635v38M619.5 447v12M619.5 462v48M619.5 588v61M620.5 478v139M611.5 195v1M612.5 199v5M613.5 207v6M614.5 215v6M615.5 224v6M616.5 233v6M617.5 242v7M618.5 251v7M619.5 261v7M620.5 271v8M621.5 281v8M622.5 292v9M623.5 303v10M624.5 315v10M625.5 327v12M626.5 341v12M627.5 354v15M628.5 369v17M629.5 385v21M630.5 403v26M631.5 422v36M631.5 638v22M632.5 445v14M632.5 462v43M632.5 593v58M633.5 475v145M622.5 215v4M623.5 221v7M624.5 230v7M625.5 239v7M626.5 249v7M627.5 258v8M628.5 268v8M629.5 279v8M630.5 290v8M631.5 301v9M632.5 313v10M633.5 325v11M634.5 338v12M635.5 352v13M636.5 366v17M637.5 382v20M638.5 399v26M639.5 419v34M640.5 441v18M640.5 462v33M640.5 602v8M641.5 470v140M642.5 520v54M638.5 290v2M639.5 295v8M640.5 307v8M641.5 319v9M642.5 332v10M643.5 345v12M644.5 360v13M645.5 375v16M646.5 392v20M647.5 410v27M648.5 431v28M648.5 462v9M649.5 457v2M649.5 462v83M650.5 493v52"/>
</g>
<rect x="105.9" y="194.0" width="570.2" height="533.8" fill="none" stroke="#000" stroke-width="1.6"/>
<line x1="99.9" x2="682.9" y1="642.45" y2="642.45" stroke="#0000ff" stroke-width="1.2"/>
<line x1="105.90" x2="105.90" y1="727.8" y2="734.6999999999999" stroke="#000" stroke-width="1.4"/>
<line x1="99.0" x2="105.9" y1="727.80" y2="727.80" stroke="#000" stroke-width="1.4"/>
<line x1="220.88" x2="220.88" y1="727.8" y2="734.6999999999999" stroke="#000" stroke-width="1.4"/>
<line x1="99.0" x2="105.9" y1="612.82" y2="612.82" stroke="#000" stroke-width="1.4"/>
<line x1="335.86" x2="335.86" y1="727.8" y2="734.6999999999999" stroke="#000" stroke-width="1.4"/>
<line x1="99.0" x2="105.9" y1="497.84" y2="497.84" stroke="#000" stroke-width="1.4"/>
<line x1="450.84" x2="450.84" y1="727.8" y2="734.6999999999999" stroke="#000" stroke-width="1.4"/>
<line x1="99.0" x2="105.9" y1="382.86" y2="382.86" stroke="#000" stroke-width="1.4"/>
<line x1="565.82" x2="565.82" y1="727.8" y2="734.6999999999999" stroke="#000" stroke-width="1.4"/>
<line x1="99.0" x2="105.9" y1="267.88" y2="267.88" stroke="#000" stroke-width="1.4"/>
<defs><linearGradient id="hot" x1="0" y1="1" x2="0" y2="0"><stop offset="0" stop-color="#0b0000"/><stop offset="0.365079" stop-color="#ff0000"/><stop offset="0.746032" stop-color="#ffff00"/><stop offset="1" stop-color="#ffffff"/></linearGradient></defs>
<rect x="712.05" y="112.85" width="35.10" height="696.15" fill="url(#hot)" stroke="#000" stroke-width="1.5"/>
<line x1="747.15" x2="754.05" y1="133.90" y2="133.90" stroke="#000" stroke-width="1.4"/>
<line x1="747.15" x2="754.05" y1="266.70" y2="266.70" stroke="#000" stroke-width="1.4"/>
<line x1="747.15" x2="754.05" y1="399.50" y2="399.50" stroke="#000" stroke-width="1.4"/>
<line x1="747.15" x2="754.05" y1="532.30" y2="532.30" stroke="#000" stroke-width="1.4"/>
<line x1="747.15" x2="754.05" y1="665.10" y2="665.10" stroke="#000" stroke-width="1.4"/>
<line x1="747.15" x2="754.05" y1="797.90" y2="797.90" stroke="#000" stroke-width="1.4"/>
<rect x="911.06" y="112.95" width="273.88" height="119.88" fill="#fff"/>
<polyline fill="none" stroke="#0000ff" stroke-width="1.5" stroke-linejoin="miter" points="911.1,232.8 1042.0,232.8 1042.0,119.2 1048.1,119.2 1048.1,120.3 1053.0,120.3 1053.0,144.7 1059.1,144.7 1059.1,148.0 1064.2,148.0 1064.2,148.8 1070.2,148.8 1070.2,149.9 1091.6,149.9 1091.6,151.0 1114.9,151.0 1114.9,152.0 1136.9,152.0 1136.9,152.8 1170.7,152.8 1170.7,153.9 1182.0,153.9 1182.0,138.0 1184.9,138.0"/>
<rect x="911.06" y="112.95" width="273.88" height="119.88" fill="none" stroke="#000" stroke-width="1.6"/>
<line x1="904.16" x2="911.06" y1="114.06" y2="114.06" stroke="#000" stroke-width="1.4"/>
<line x1="904.16" x2="911.06" y1="143.77" y2="143.77" stroke="#000" stroke-width="1.4"/>
<line x1="904.16" x2="911.06" y1="173.48" y2="173.48" stroke="#000" stroke-width="1.4"/>
<line x1="904.16" x2="911.06" y1="203.19" y2="203.19" stroke="#000" stroke-width="1.4"/>
<line x1="904.16" x2="911.06" y1="232.90" y2="232.90" stroke="#000" stroke-width="1.4"/>
<line x1="912.99" x2="912.99" y1="232.83" y2="239.73000000000002" stroke="#000" stroke-width="1.4"/>
<line x1="957.31" x2="957.31" y1="232.83" y2="239.73000000000002" stroke="#000" stroke-width="1.4"/>
<line x1="1001.63" x2="1001.63" y1="232.83" y2="239.73000000000002" stroke="#000" stroke-width="1.4"/>
<line x1="1045.95" x2="1045.95" y1="232.83" y2="239.73000000000002" stroke="#000" stroke-width="1.4"/>
<line x1="1090.27" x2="1090.27" y1="232.83" y2="239.73000000000002" stroke="#000" stroke-width="1.4"/>
<line x1="1134.59" x2="1134.59" y1="232.83" y2="239.73000000000002" stroke="#000" stroke-width="1.4"/>
<line x1="1178.91" x2="1178.91" y1="232.83" y2="239.73000000000002" stroke="#000" stroke-width="1.4"/>
<rect x="911.06" y="284.88" width="273.88" height="119.88" fill="#fff"/>
<polyline fill="none" stroke="#0000ff" stroke-width="1.5" stroke-linejoin="miter" points="912.0,404.8 924.8,404.8 924.8,374.7 930.1,374.7 930.1,290.8 936.1,290.8 936.1,319.8 941.0,319.8 941.0,322.9 953.0,322.9 953.0,323.9 975.2,323.9 975.2,324.8 992.0,324.8 992.0,325.8 1009.2,325.8 1009.2,326.7 1047.5,326.7 1047.5,327.7 1069.9,327.7 1069.9,328.9 1080.7,328.9 1080.7,329.9 1092.0,329.9 1092.0,330.8 1098.1,330.8 1098.1,331.8 1103.6,331.8 1103.6,334.9 1109.2,334.9 1109.2,339.8 1114.7,339.8 1114.7,348.0 1120.0,348.0 1120.0,362.9 1126.0,362.9 1126.0,387.7 1132.0,387.7 1132.0,404.8 1171.1,404.8 1171.1,397.6 1176.4,397.6 1176.4,404.8 1183.0,404.8"/>
<rect x="911.06" y="284.88" width="273.88" height="119.88" fill="none" stroke="#000" stroke-width="1.6"/>
<line x1="904.16" x2="911.06" y1="289.94" y2="289.94" stroke="#000" stroke-width="1.4"/>
<line x1="904.16" x2="911.06" y1="318.66" y2="318.66" stroke="#000" stroke-width="1.4"/>
<line x1="904.16" x2="911.06" y1="347.38" y2="347.38" stroke="#000" stroke-width="1.4"/>
<line x1="904.16" x2="911.06" y1="376.10" y2="376.10" stroke="#000" stroke-width="1.4"/>
<line x1="904.16" x2="911.06" y1="404.82" y2="404.82" stroke="#000" stroke-width="1.4"/>
<line x1="929.04" x2="929.04" y1="404.76" y2="411.65999999999997" stroke="#000" stroke-width="1.4"/>
<line x1="966.34" x2="966.34" y1="404.76" y2="411.65999999999997" stroke="#000" stroke-width="1.4"/>
<line x1="1003.64" x2="1003.64" y1="404.76" y2="411.65999999999997" stroke="#000" stroke-width="1.4"/>
<line x1="1040.94" x2="1040.94" y1="404.76" y2="411.65999999999997" stroke="#000" stroke-width="1.4"/>
<line x1="1078.24" x2="1078.24" y1="404.76" y2="411.65999999999997" stroke="#000" stroke-width="1.4"/>
<line x1="1115.54" x2="1115.54" y1="404.76" y2="411.65999999999997" stroke="#000" stroke-width="1.4"/>
<line x1="1152.84" x2="1152.84" y1="404.76" y2="411.65999999999997" stroke="#000" stroke-width="1.4"/>
<rect x="911.06" y="516.95" width="273.88" height="120.01" fill="#fff"/>
<clipPath id="c3"><rect x="911.06" y="516.95" width="273.88" height="120.01"/></clipPath>
<g clip-path="url(#c3)"><path d="M914.10 576.3V523.3h2.4V576.3zM923.70 576.3V510h2.4V576.3zM933.00 576.3V510h2.8V576.3zM942.05 576.3V510h1.9V576.3zM945.15 576.3V510h1.9V576.3zM953.00 576.3V510h3.0V576.3zM961.45 576.3V510h2.5V576.3zM969.90 576.3V510h2.4V576.3zM980.05 576.3V510h3.1V576.3zM988.10 576.3V510h2.6V576.3zM995.50 576.3V510h2.4V576.3zM1003.25 576.3V510h2.5V576.3zM1010.10 576.3V510h5.0V576.3zM1019.60 576.3V510h2.4V576.3zM1026.10 576.3V510h2.8V576.3zM1033.15 576.3V510h2.9V576.3zM1039.50 576.3V510h2.4V576.3zM1049.30 576.3V518.4h2.4V576.3zM1055.50 576.3V517.7h2.4V576.3zM1061.70 576.3V519.3h2.4V576.3zM1067.30 576.3V520.3h2.4V576.3zM1072.80 576.3V521.3h2.6V576.3zM1079.20 576.3V524.4h2.6V576.3zM1087.00 576.3V524.8h2.4V576.3zM1092.00 576.3V524.8h2.6V576.3zM1097.30 576.3V525.4h2.4V576.3zM1102.70 576.3V526.7h2.4V576.3zM1107.60 576.3V529.3h2.4V576.3zM1112.80 576.3V530.6h2.2V576.3zM1120.00 576.3V531.2h2.4V576.3zM1124.70 576.3V532.1h2.4V576.3zM1129.30 576.3V535.1h2.6V576.3zM1134.00 576.3V537h2.2V576.3zM1138.00 576.3V538.5h2.4V576.3zM1142.20 576.3V540.2h2.6V576.3zM1147.10 576.3V542.1h2.2V576.3zM1153.10 576.3V544.3h2.6V576.3zM1157.30 576.3V547h2.4V576.3zM1161.60 576.3V550.5h2.4V576.3zM1165.40 576.3V563h2.4V576.3zM1169.90 576.3V574.3h1.2V576.3z" fill="#0000ff"/>
<rect x="916.4" y="527.2" width="0.7" height="48" fill="#0000ff"/>
<line x1="911.06" x2="1184.94" y1="575.8" y2="575.8" stroke="#0000ff" stroke-width="1.2"/></g>
<rect x="1108.8" y="519.6" width="73.2" height="16.7" rx="2" fill="#fff" fill-opacity="0.8" stroke="#ccc" stroke-width="1"/>
<line x1="1111.5" x2="1133.8" y1="527.5" y2="527.5" stroke="#0000ff" stroke-width="1.3"/>
<rect x="911.06" y="516.95" width="273.88" height="120.01" fill="none" stroke="#000" stroke-width="1.6"/>
<line x1="904.16" x2="911.06" y1="538.90" y2="538.90" stroke="#000" stroke-width="1.4"/>
<line x1="904.16" x2="911.06" y1="578.00" y2="578.00" stroke="#000" stroke-width="1.4"/>
<line x1="904.16" x2="911.06" y1="617.00" y2="617.00" stroke="#000" stroke-width="1.4"/>
<line x1="911.06" x2="911.06" y1="636.96" y2="643.86" stroke="#000" stroke-width="1.4"/>
<line x1="966.01" x2="966.01" y1="636.96" y2="643.86" stroke="#000" stroke-width="1.4"/>
<line x1="1020.96" x2="1020.96" y1="636.96" y2="643.86" stroke="#000" stroke-width="1.4"/>
<line x1="1075.91" x2="1075.91" y1="636.96" y2="643.86" stroke="#000" stroke-width="1.4"/>
<line x1="1130.86" x2="1130.86" y1="636.96" y2="643.86" stroke="#000" stroke-width="1.4"/>
<g style="will-change:transform;mix-blend-mode:multiply">
<text x="6.20" y="23.00" font-size="16.67">2025-01-19: ESPRESSO</text>
<text x="336.40" y="22.90" font-size="12.5">type info</text>
<text x="629.50" y="22.90" font-size="12.5">set-up info</text>
<text x="6.80" y="44.80" font-size="12.5">ORIGFILE:</text>
<text x="75.20" y="45.70" font-size="12.5">ESPRESSO_SINGLEHR_FLAT020_0020</text>
<text x="6.80" y="61.80" font-size="12.5">ARCFILE:</text>
<text x="75.20" y="61.80" font-size="12.5">ESPRE.2025-01-20T09:06:02.757.fits</text>
<text x="6.80" y="79.70" font-size="12.5">raw_type:</text>
<text x="75.20" y="79.70" font-size="12.5">FLAT</text>
<text x="6.80" y="97.70" font-size="12.5">do_class:</text>
<text x="75.20" y="97.70" font-size="12.5">FLAT_B</text>
<text x="6.80" y="113.80" font-size="12.5">extension:</text>
<text x="75.20" y="113.80" font-size="12.5">2</text>
<text x="335.90" y="44.90" font-size="12.5">DPR.CATG:</text>
<text x="404.70" y="44.90" font-size="12.5">CALIB</text>
<text x="335.90" y="62.00" font-size="12.5">DPR.TYPE:</text>
<text x="404.70" y="62.00" font-size="12.5">FLAT,OFF,LAMP</text>
<text x="335.90" y="80.40" font-size="12.5">DPR.TECH:</text>
<text x="404.70" y="80.40" font-size="12.5">ECHELLE</text>
<text x="335.90" y="97.10" font-size="12.5">TPL.ID:</text>
<text x="404.70" y="97.10" font-size="12.5">ESPRESSO_singleHR_cal_ff</text>
<text x="629.40" y="42.70" font-size="10.42">INS.MODE:</text>
<text x="760.20" y="42.70" font-size="10.25">SINGLEHR</text>
<text x="629.40" y="55.70" font-size="10.42">DET.BINX:</text>
<text x="760.20" y="55.70" font-size="10.25">1</text>
<text x="629.40" y="68.60" font-size="10.42">DET.BINY:</text>
<text x="760.20" y="68.60" font-size="10.25">1</text>
<text x="6.20" y="863.50" font-size="10.42">powered by QC: www.eso.org/HC</text>
<text x="1238.80" y="863.50" font-size="10.42" text-anchor="end">created by qc_rawdisp.py v1.2.3 on 2025-01-20T09:52:26</text>
<text x="106.40" y="750.60" font-size="9.72" text-anchor="middle">0</text>
<text x="91.10" y="731.70" font-size="9.72" text-anchor="end">0</text>
<text x="221.38" y="750.60" font-size="9.72" text-anchor="middle">2000</text>
<text x="91.10" y="616.72" font-size="9.72" text-anchor="end">2000</text>
<text x="336.36" y="750.60" font-size="9.72" text-anchor="middle">4000</text>
<text x="91.10" y="501.74" font-size="9.72" text-anchor="end">4000</text>
<text x="451.34" y="750.60" font-size="9.72" text-anchor="middle">6000</text>
<text x="91.10" y="386.76" font-size="9.72" text-anchor="end">6000</text>
<text x="566.32" y="750.60" font-size="9.72" text-anchor="middle">8000</text>
<text x="91.10" y="271.78" font-size="9.72" text-anchor="end">8000</text>
<text x="391.50" y="768.70" font-size="10.42" text-anchor="middle">X</text>
<text x="53.80" y="460.90" font-size="10.42" text-anchor="middle" transform="rotate(-90 53.80 460.90)">Y</text>
<text x="762.20" y="137.50" font-size="9.72">6000</text>
<text x="762.20" y="270.30" font-size="9.72">4000</text>
<text x="762.20" y="403.10" font-size="9.72">2000</text>
<text x="762.20" y="535.90" font-size="9.72">0</text>
<text x="762.20" y="668.70" font-size="9.72">−2000</text>
<text x="762.20" y="801.50" font-size="9.72">−4000</text>
<text x="896.60" y="117.66" font-size="9.72" text-anchor="end">8</text>
<text x="896.60" y="147.37" font-size="9.72" text-anchor="end">6</text>
<text x="896.60" y="177.08" font-size="9.72" text-anchor="end">4</text>
<text x="896.60" y="206.79" font-size="9.72" text-anchor="end">2</text>
<text x="896.60" y="236.50" font-size="9.72" text-anchor="end">0</text>
<text x="912.99" y="255.60" font-size="9.72" text-anchor="middle">-30000</text>
<text x="1001.63" y="255.60" font-size="9.72" text-anchor="middle">-10000</text>
<text x="1090.27" y="255.60" font-size="9.72" text-anchor="middle">10000</text>
<text x="1178.91" y="255.60" font-size="9.72" text-anchor="middle">30000</text>
<text x="1048.00" y="273.90" font-size="10.1" text-anchor="middle">counts</text>
<text x="877.70" y="173.50" font-size="10.42" text-anchor="middle" transform="rotate(-90 877.70 173.50)">log frequency</text>
<text x="1193.80" y="174.70" font-size="10.42" text-anchor="middle" transform="rotate(90 1193.80 174.70)">histogram (detail)</text>
<text x="896.60" y="293.54" font-size="9.72" text-anchor="end">8</text>
<text x="896.60" y="322.26" font-size="9.72" text-anchor="end">6</text>
<text x="896.60" y="350.98" font-size="9.72" text-anchor="end">4</text>
<text x="896.60" y="379.70" font-size="9.72" text-anchor="end">2</text>
<text x="896.60" y="408.42" font-size="9.72" text-anchor="end">0</text>
<text x="929.04" y="427.60" font-size="9.72" text-anchor="middle">0</text>
<text x="1003.64" y="427.60" font-size="9.72" text-anchor="middle">20000</text>
<text x="1078.24" y="427.60" font-size="9.72" text-anchor="middle">40000</text>
<text x="1152.84" y="427.60" font-size="9.72" text-anchor="middle">60000</text>
<text x="1048.00" y="445.90" font-size="10.1" text-anchor="middle">counts</text>
<text x="877.70" y="345.50" font-size="10.42" text-anchor="middle" transform="rotate(-90 877.70 345.50)">log frequency</text>
<text x="1193.80" y="349.40" font-size="10.42" text-anchor="middle" transform="rotate(90 1193.80 349.40)">histogram (full)</text>
<text x="1138.00" y="531.20" font-size="10.3">y=1500</text>
<text x="895.80" y="542.50" font-size="9.72" text-anchor="end">20000</text>
<text x="895.80" y="581.60" font-size="9.72" text-anchor="end">0</text>
<text x="895.80" y="620.60" font-size="9.72" text-anchor="end">−20000</text>
<text x="911.76" y="659.70" font-size="9.72" text-anchor="middle">0</text>
<text x="966.71" y="659.70" font-size="9.72" text-anchor="middle">2000</text>
<text x="1021.66" y="659.70" font-size="9.72" text-anchor="middle">4000</text>
<text x="1076.61" y="659.70" font-size="9.72" text-anchor="middle">6000</text>
<text x="1131.56" y="659.70" font-size="9.72" text-anchor="middle">8000</text>
<text x="1047.70" y="677.80" font-size="10.42" text-anchor="middle">X</text>
<text x="843.60" y="577.00" font-size="10.1" text-anchor="middle" transform="rotate(-90 843.60 577.00)">counts</text>
<text x="1193.80" y="575.40" font-size="10.42" text-anchor="middle" transform="rotate(90 1193.80 575.40)">cut in x</text>
<text x="1046.00" y="751.20" font-size="10.42" text-anchor="middle">cut in y not configured</text>
</g>
</svg>
</body></html>
